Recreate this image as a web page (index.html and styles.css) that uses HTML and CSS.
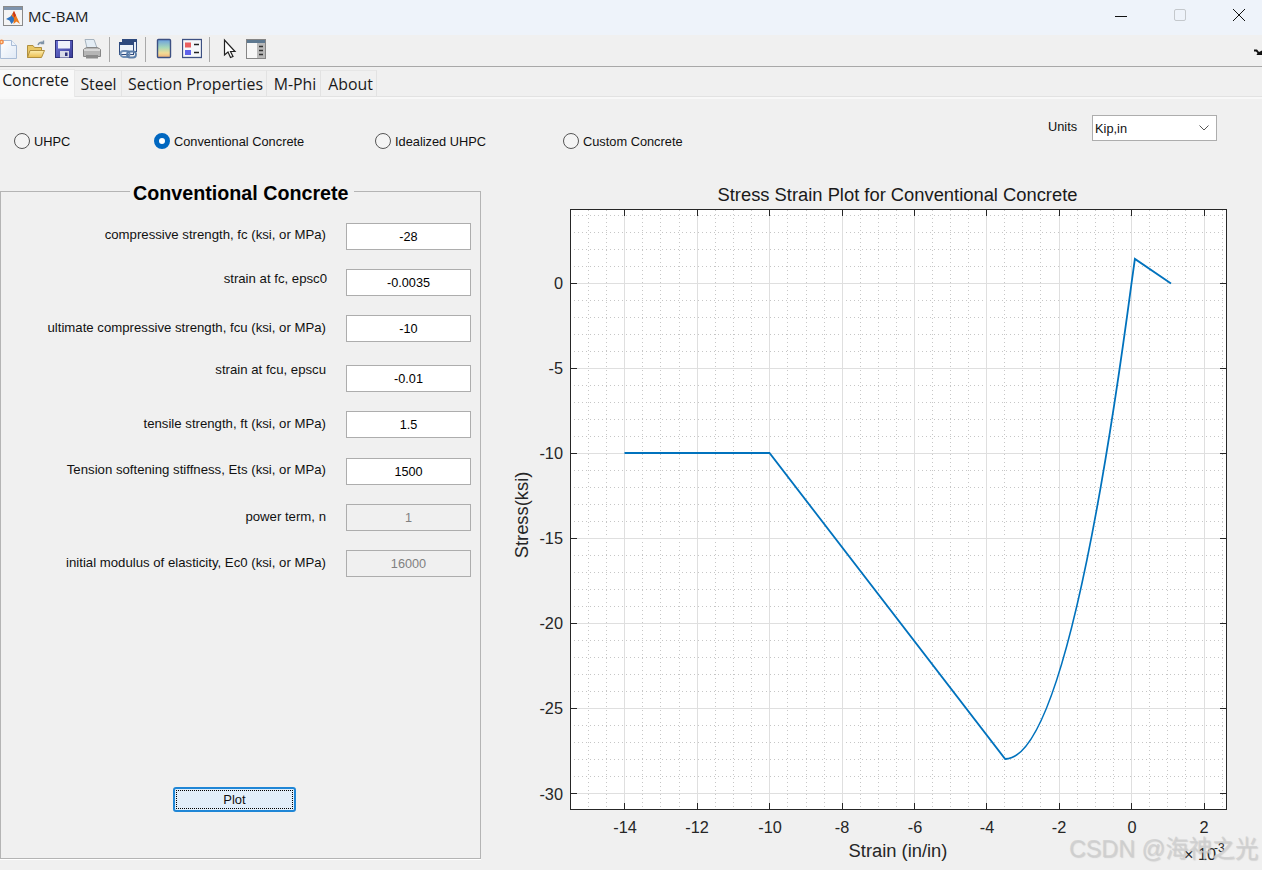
FILE: index.html
```html
<!DOCTYPE html>
<html lang="en">
<head>
<meta charset="utf-8">
<title>MC-BAM</title>
<link rel="stylesheet" href="styles.css">
</head>
<body>
<div class="window">
  <header class="titlebar">
    <svg class="app-icon" viewBox="0 0 20 20">
      <rect x="0.5" y="0.5" width="19" height="19" fill="#f4f4f4" stroke="#8a8a8a"/>
      <rect x="1" y="1" width="18" height="3" fill="#7d93ad"/>
      <path d="M3 13 L7.5 10.5 L10 7 L12 14 L8.5 18 L6.5 14.5Z" fill="#2f74c0"/>
      <path d="M8.5 9.5 L11 5 L17 18 L13.5 15.5 L10.5 18 L11 12Z" fill="#ec7a1e"/>
      <path d="M10 7 L11 5 L13 9.5 L11 11.5Z" fill="#c9341a"/>
    </svg>
    <span class="app-name">MC-BAM</span>
    <div class="win-controls">
      <svg class="win-btn" viewBox="0 0 14 14"><path d="M1 8.5H13" stroke="#111" fill="none"/></svg>
      <svg class="win-btn" viewBox="0 0 14 14"><rect x="1.5" y="1.5" width="11" height="11" rx="1.5" fill="none" stroke="#c4c8cc"/></svg>
      <svg class="win-btn" viewBox="0 0 14 14"><path d="M1 1L13 13M13 1L1 13" stroke="#111" fill="none"/></svg>
    </div>
  </header>

  <div class="toolbar">
    <svg class="tool tool-first" viewBox="0 0 20 22">
      <defs><linearGradient id="pg" x1="0" y1="0" x2="1" y2="1"><stop offset="0" stop-color="#fff"/><stop offset="1" stop-color="#dfe9f6"/></linearGradient></defs>
      <path d="M2.5 2.5H13.5L18.5 7.5V20.5H2.5Z" fill="url(#pg)" stroke="#a9bcd6"/>
      <path d="M13.5 2.5V7.5H18.5" fill="#eef3fa" stroke="#a9bcd6"/>
      <circle cx="3.5" cy="4" r="2.4" fill="#f08a4a"/><circle cx="3.5" cy="4" r="0.9" fill="#ffe2b0"/>
    </svg>
    <svg class="tool" viewBox="0 0 20 22">
      <defs><linearGradient id="fo" x1="0" y1="0" x2="0" y2="1"><stop offset="0" stop-color="#fdeeb0"/><stop offset="1" stop-color="#eabd4e"/></linearGradient></defs>
      <path d="M1.5 19.5V7.5H7L8.5 9.5H15.5V12" fill="#e9c766" stroke="#b08f3d"/>
      <path d="M1.5 19.5L4 12.5H18.5L15.5 19.5Z" fill="url(#fo)" stroke="#b08f3d"/>
      <path d="M12 7C13 4.5 15 3.8 17.5 4.5M17.5 2.5V5.5H14.7" fill="none" stroke="#7f93a8" stroke-width="1.4"/>
    </svg>
    <svg class="tool" viewBox="0 0 20 22">
      <defs><linearGradient id="fl" x1="0" y1="0" x2="1" y2="1"><stop offset="0" stop-color="#6f74d6"/><stop offset="1" stop-color="#3a3d98"/></linearGradient></defs>
      <rect x="1.5" y="2.5" width="17" height="17" fill="url(#fl)" stroke="#2d3078"/>
      <rect x="4" y="3" width="12" height="7.5" fill="#eef0fa"/>
      <rect x="6" y="13" width="9" height="6.5" fill="#d9dbe8"/>
      <rect x="11" y="14.5" width="2.5" height="3.5" fill="#2d3078"/>
    </svg>
    <svg class="tool" viewBox="0 0 20 22">
      <path d="M5 10L3 1.5H12L15 10Z" fill="#e4edf5" stroke="#a5b2be"/>
      <path d="M1.5 11.5L4.5 9.5H15.5L18.5 11.5V18.5H1.5Z" fill="#b5b5b5" stroke="#868686"/>
      <rect x="2" y="11" width="16" height="2" fill="#d7d7d7"/>
      <rect x="4" y="17" width="12" height="3.5" fill="#8b8b8b"/>
    </svg>
    <span class="sep sep-a"></span>
    <svg class="tool" viewBox="0 0 20 22">
      <rect x="4.5" y="1.5" width="14" height="12" fill="#e7eef7" stroke="#2e4a7e"/>
      <rect x="4.5" y="1.5" width="14" height="2.5" fill="#2e4a7e"/>
      <rect x="1.5" y="4.5" width="14" height="12" fill="#eef3fa" stroke="#2e4a7e"/>
      <rect x="1.5" y="4.5" width="14" height="2.5" fill="#2e4a7e"/>
      <rect x="2.5" y="13" width="9" height="6" rx="3" fill="none" stroke="#6f8fb6" stroke-width="1.8"/>
      <rect x="9" y="13.5" width="9" height="6" rx="3" fill="none" stroke="#5a7da8" stroke-width="1.8"/>
    </svg>
    <span class="sep sep-b"></span>
    <svg class="tool" viewBox="0 0 20 22">
      <defs><linearGradient id="cb" x1="0" y1="0" x2="0" y2="1"><stop offset="0" stop-color="#6a9fe0"/><stop offset="0.45" stop-color="#a8d8b8"/><stop offset="0.75" stop-color="#f2dc96"/><stop offset="1" stop-color="#f0b078"/></linearGradient></defs>
      <rect x="3.5" y="1.5" width="13" height="18" rx="1" fill="url(#cb)" stroke="#3d5082" stroke-width="1.4"/>
    </svg>
    <svg class="tool" viewBox="0 0 20 22">
      <rect x="0.5" y="1.5" width="19" height="18" fill="#f5f7fa" stroke="#3d5082" stroke-width="1.3"/>
      <rect x="3" y="4.5" width="6" height="5" fill="#ea5f5f"/>
      <rect x="3" y="12" width="6" height="5" fill="#5f62ea"/>
      <path d="M12 6.5H17M12 14.5H17" stroke="#222" stroke-width="1.4"/>
    </svg>
    <span class="sep sep-b"></span>
    <svg class="tool" viewBox="0 0 20 22">
      <path d="M6.5 2V17L10 14L12.5 19.5L15 18.5L12.5 13.5H17Z" fill="#fff" stroke="#222" stroke-width="1.2"/>
    </svg>
    <svg class="tool" viewBox="0 0 20 22">
      <rect x="0.5" y="1.5" width="19" height="19" fill="#f6f6f6" stroke="#858585"/>
      <rect x="1" y="2" width="18" height="3" fill="#5d7890"/>
      <rect x="11" y="5" width="8" height="15" fill="#b9b9b9"/>
      <path d="M13 8.5H17M13 12.5H17M13 16.5H17" stroke="#333" stroke-width="1.4"/>
    </svg>
    <svg class="tool-more" viewBox="0 0 8 8"><path d="M0 1.5H3L5 4L8 2.5V7H2.5L3.5 5L2 3.5H0Z" fill="#111"/></svg>
  </div>

  <nav class="tabs">
    <span class="tab tab-active">Concrete</span>
    <span class="tab tab-steel">Steel</span>
    <span class="tab tab-section">Section Properties</span>
    <span class="tab tab-mphi">M-Phi</span>
    <span class="tab tab-about">About</span>
  </nav>

  <main class="content">
    <div class="options">
      <label class="radio radio-uhpc"><input type="radio" name="kind"><span>UHPC</span></label>
      <label class="radio radio-conv"><input type="radio" name="kind" checked><span>Conventional Concrete</span></label>
      <label class="radio radio-ideal"><input type="radio" name="kind"><span>Idealized UHPC</span></label>
      <label class="radio"><input type="radio" name="kind"><span>Custom Concrete</span></label>
      <div class="units">
        <span class="units-label">Units</span>
        <div class="select">
          <span>Kip,in</span>
          <svg class="chevron" viewBox="0 0 10 6"><path d="M0.5 0.5L5 5L9.5 0.5" fill="none" stroke="#555"/></svg>
        </div>
      </div>
    </div>

    <div class="work">
      <section class="panel">
        <h2 class="panel-title">Conventional Concrete</h2>
        <div class="rows">
          <div class="row"><label class="up2">compressive strength, fc (ksi, or MPa)</label><input value="-28"></div>
          <div class="row"><label class="up4 nudge">strain at fc, epsc0</label><input value="-0.0035"></div>
          <div class="row"><label class="up1">ultimate compressive strength, fcu (ksi, or MPa)</label><input value="-10"></div>
          <div class="row row-wide"><label class="up9">strain at fcu, epscu</label><input value="-0.01"></div>
          <div class="row"><label class="up1">tensile strength, ft (ksi, or MPa)</label><input value="1.5"></div>
          <div class="row row-mid"><label class="up2">Tension softening stiffness, Ets (ksi, or MPa)</label><input value="1500"></div>
          <div class="row"><label class="up1">power term, n</label><input value="1" disabled></div>
          <div class="row"><label class="up1">initial modulus of elasticity, Ec0 (ksi, or MPa)</label><input value="16000" disabled></div>
        </div>
        <div class="actions"><button class="plot-btn" type="button"><span>Plot</span></button></div>
      </section>

      <svg class="chart" viewBox="490 170 772 700">
        <rect x="570.5" y="209.5" width="656" height="600" fill="#fff"/>
        <path class="minor" d="M588.5 210V809M606.5 210V809M642.5 210V809M660.5 210V809M679.5 210V809M715.5 210V809M733.5 210V809M751.5 210V809M787.5 210V809M806.5 210V809M824.5 210V809M860.5 210V809M878.5 210V809M896.5 210V809M932.5 210V809M950.5 210V809M968.5 210V809M1004.5 210V809M1022.5 210V809M1040.5 210V809M1077.5 210V809M1095.5 210V809M1113.5 210V809M1149.5 210V809M1167.5 210V809M1185.5 210V809M1222.5 210V809"/>
        <path class="minor" d="M574 215.5H1226M574 232.5H1226M574 249.5H1226M574 266.5H1226M574 300.5H1226M574 317.5H1226M574 334.5H1226M574 351.5H1226M574 385.5H1226M574 402.5H1226M574 419.5H1226M574 436.5H1226M574 470.5H1226M574 487.5H1226M574 504.5H1226M574 521.5H1226M574 555.5H1226M574 572.5H1226M574 589.5H1226M574 606.5H1226M574 640.5H1226M574 657.5H1226M574 674.5H1226M574 691.5H1226M574 725.5H1226M574 742.5H1226M574 759.5H1226M574 776.5H1226"/>
        <path class="major" d="M624.5 210V809M697.5 210V809M769.5 210V809M842.5 210V809M914.5 210V809M986.5 210V809M1059.5 210V809M1131.5 210V809M1204.5 210V809M571 283.5H1226M571 368.5H1226M571 453.5H1226M571 538.5H1226M571 623.5H1226M571 708.5H1226M571 793.5H1226"/>
        <path class="curve" d="M624.5 453H769.5L1005.2 759Q1068.35 759 1131.5 283.4L1134.9 258.9L1171 283.4"/>
        <rect class="box" x="570.5" y="209.5" width="656" height="600"/>
        <path class="ticks" d="M624.5 210v6M697.5 210v6M769.5 210v6M842.5 210v6M914.5 210v6M986.5 210v6M1059.5 210v6M1131.5 210v6M1204.5 210v6M624.5 809v-6M697.5 809v-6M769.5 809v-6M842.5 809v-6M914.5 809v-6M986.5 809v-6M1059.5 809v-6M1131.5 809v-6M1204.5 809v-6M571 283.5h6M571 368.5h6M571 453.5h6M571 538.5h6M571 623.5h6M571 708.5h6M571 793.5h6M1226 283.5h-6M1226 368.5h-6M1226 453.5h-6M1226 538.5h-6M1226 623.5h-6M1226 708.5h-6M1226 793.5h-6"/>
        <text class="chart-title" x="897.5" y="201">Stress Strain Plot for Conventional Concrete</text>
        <g class="xticks">
          <text x="625" y="833">-14</text><text x="697" y="833">-12</text><text x="770" y="833">-10</text><text x="842" y="833">-8</text><text x="915" y="833">-6</text><text x="987" y="833">-4</text><text x="1059" y="833">-2</text><text x="1132" y="833">0</text><text x="1204" y="833">2</text>
        </g>
        <g class="yticks">
          <text x="563" y="289">0</text><text x="563" y="374">-5</text><text x="563" y="459">-10</text><text x="563" y="544">-15</text><text x="563" y="629">-20</text><text x="563" y="714">-25</text><text x="563" y="800">-30</text>
        </g>
        <text class="axis-label" x="898" y="857">Strain (in/in)</text>
        <text class="axis-label" transform="translate(528 515) rotate(-90)">Stress(ksi)</text>
        <text class="exp" x="1184" y="860">× 10</text>
        <text class="exp-sup" x="1214" y="852">-3</text>
      </svg>
    </div>
  </main>
  <div class="watermark">CSDN @海神之光</div>
</div>
</body>
</html>
```

FILE: styles.css
```css
* { box-sizing: border-box; }
html, body { margin: 0; padding: 0; }
body { width: 1262px; height: 870px; overflow: hidden; background: #f0f0f0; font-family: "Liberation Sans", Arial, sans-serif; color: #111; }
.window { position: relative; width: 1262px; height: 870px; display: flex; flex-direction: column; }

.titlebar { height: 35px; flex: none; display: flex; align-items: center; background: #eef3fa; padding-left: 3px; }
.app-icon { width: 20px; height: 20px; flex: none; margin-top: -3px; }
.app-name { margin-left: 5px; margin-top: -4px; font: 15px "Open Sans", "Noto Sans", sans-serif; color: #1a1a1a; }
.win-controls { margin-left: auto; display: flex; margin-right: 16px; margin-top: -5px; gap: 45px; }
.win-btn { width: 14px; height: 14px; display: block; }

.toolbar { height: 32px; flex: none; display: flex; align-items: center; gap: 8px; padding-bottom: 3px; background: #f0f0f0; border-bottom: 1px solid #a8a8a8; overflow: hidden; }
.tool { width: 20px; height: 22px; flex: none; display: block; }
.tool-first { margin-left: -2px; }
.sep { width: 1px; height: 25px; flex: none; background: #a9a9a9; }
.sep-a { margin-left: -1px; }
.sep-b { margin-left: -1px; }
.tool-more { width: 8px; height: 8px; flex: none; margin-left: auto; margin-top: 6px; }

.tabs { height: 30px; flex: none; display: flex; align-items: flex-end; background: #f0f0f0; border-bottom: 1px solid #e2e2e2; box-shadow: 0 2px 0 #f8f8f8; }
.tab { height: 26px; padding-top: 3px; text-align: center; background: #f0f0f0; border-right: 1px solid #e2e2e2; border-top: 1px solid #e6e6e6; font: 15.85px/21px "Open Sans", "Noto Sans", sans-serif; color: #1a1a1a; white-space: nowrap; }
.tab-active { width: 75px; height: 28px; padding-top: 0; padding-right: 3px; margin-bottom: -1px; background: #f9f9f9; border-color: #e8e8e8; }
.tab-steel { width: 47px; padding-left: 1px; }
.tab-section { width: 145px; padding-left: 3px; }
.tab-mphi { width: 54px; padding-left: 3px; }
.tab-about { width: 56px; padding-left: 4px; }

.content { flex: 1; display: flex; flex-direction: column; min-height: 0; }
.options { height: 73px; flex: none; display: flex; align-items: flex-start; padding: 36px 0 0 14px; font-size: 12.8px; position: relative; }
.radio { display: flex; align-items: center; gap: 4px; height: 16px; white-space: nowrap; }
.radio input { appearance: none; -webkit-appearance: none; margin: 0; width: 16px; height: 16px; border: 1px solid #555; border-radius: 50%; background: #f4f4f4; flex: none; }
.radio input:checked { border: 5px solid #0067c0; background: #fff; }
.radio-uhpc { width: 140px; }
.radio-conv { width: 221px; }
.radio-ideal { width: 188px; }
.units { margin-left: auto; display: flex; align-items: flex-start; margin-right: 45px; margin-top: -18px; }
.units-label { margin-top: 4px; width: 44px; }
.select { width: 125px; height: 26px; border: 1px solid #adadad; background: #fff; display: flex; align-items: center; justify-content: space-between; padding: 0 7px 0 2px; }
.chevron { width: 10px; height: 6px; display: block; }

.work { flex: 1; display: flex; min-height: 0; position: relative; }
.panel { width: 481px; height: 668px; margin: 21px 0 0 0; flex: none; border: 1px solid #b4b4b4; box-shadow: 0 1px 0 #fff; display: flex; flex-direction: column; }
.panel-title { width: fit-content; margin: -10px 0 0 129px; padding: 0 5px 0 3px; background: #f0f0f0; font-size: 19.7px; line-height: 23px; font-weight: 700; color: #000; }
.rows { display: flex; flex-direction: column; padding-top: 18px; }
.row { display: flex; align-items: center; height: 27px; margin-bottom: 19px; font-size: 13.2px; }
.row label { width: 325px; text-align: right; flex: none; color: #111; }
.row input { width: 125px; height: 27px; margin-left: 20px; border: 1px solid #adadad; background: #fff; text-align: center; font: 12.7px "Liberation Sans", Arial, sans-serif; color: #000; padding: 0; flex: none; }
.row input:disabled { background: #f0f0f0; color: #808080; }
.row-wide { margin-top: 4px; }
.row-mid { margin-top: 1px; }
.up1 { margin-bottom: 2px; }
.up2 { margin-bottom: 4px; }
.up4 { margin-bottom: 8px; }
.up9 { margin-bottom: 18px; }
.row .nudge { margin-right: -1px; width: 326px; }
.actions { margin-top: 191px; padding-left: 172px; }
.plot-btn { width: 123px; height: 25px; padding: 1px; border: 2px solid #1f86d6; border-radius: 3px; background: #e1eefa; font: 13px "Liberation Sans", Arial, sans-serif; color: #111; display: block; }
.plot-btn span { display: block; height: 100%; line-height: 17px; border: 1px dotted #000; }

.chart { width: 772px; height: 700px; flex: none; margin-left: 9px; display: block; align-self: flex-start; font-family: "Liberation Sans", Arial, sans-serif; }
.minor { fill: none; stroke: #c6c6c6; stroke-width: 1; stroke-dasharray: 1 3; }
.major { fill: none; stroke: #dfdfdf; stroke-width: 1; }
.curve { fill: none; stroke: #0072bd; stroke-width: 1.8; }
.box { fill: none; stroke: #262626; stroke-width: 1; }
.ticks { fill: none; stroke: #262626; stroke-width: 1; }
.chart-title { font-size: 18.35px; text-anchor: middle; fill: #1a1a1a; }
.xticks text { font-size: 16.3px; text-anchor: middle; fill: #262626; }
.yticks text { font-size: 16.3px; text-anchor: end; fill: #262626; }
.axis-label { font-size: 18.35px; text-anchor: middle; fill: #262626; }
.exp { font-size: 16.3px; fill: #262626; }
.exp-sup { font-size: 12px; fill: #262626; }

.watermark { position: absolute; left: 1069px; top: 834px; font: 23.3px/30px "Liberation Sans", "Noto Sans CJK SC", sans-serif; color: rgba(205,205,205,0.78); text-shadow: 1px 1px 1px rgba(150,150,150,0.35); white-space: nowrap; }
```
